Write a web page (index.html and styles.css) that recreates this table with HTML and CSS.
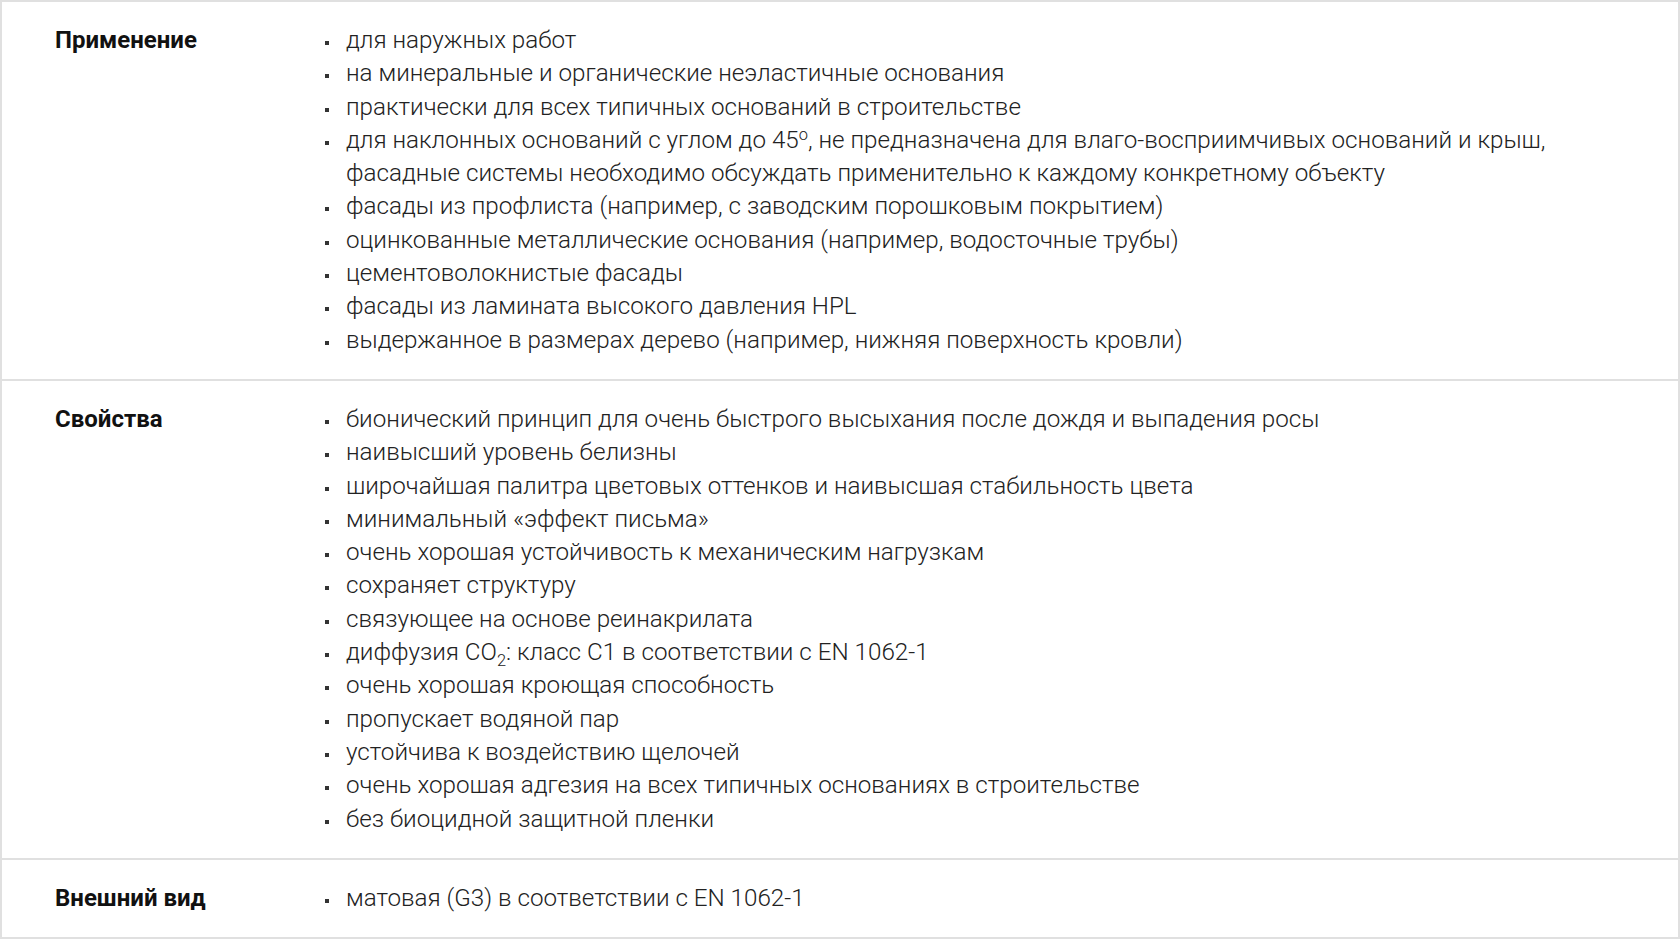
FILE: index.html
```html
<!DOCTYPE html>
<html lang="ru">
<head>
<meta charset="utf-8">
<title>Характеристики</title>
<link rel="stylesheet" href="styles.css">
</head>
<body>
<div class="spec">
  <div class="row">
    <div class="label">Применение</div>
    <ul class="list">
      <li><span>для наружных работ</span></li>
      <li><span>на минеральные и органические неэластичные основания</span></li>
      <li><span>практически для всех типичных оснований в строительстве</span></li>
      <li><span>для наклонных оснований с углом до 45<sup>o</sup>, не предназначена для влаго-восприимчивых оснований и крыш, фасадные системы необходимо обсуждать применительно к каждому конкретному объекту</span></li>
      <li><span>фасады из профлиста (например, с заводским порошковым покрытием)</span></li>
      <li><span>оцинкованные металлические основания (например, водосточные трубы)</span></li>
      <li><span>цементоволокнистые фасады</span></li>
      <li><span>фасады из ламината высокого давления HPL</span></li>
      <li><span>выдержанное в размерах дерево (например, нижняя поверхность кровли)</span></li>
    </ul>
  </div>
  <div class="row">
    <div class="label">Свойства</div>
    <ul class="list">
      <li><span>бионический принцип для очень быстрого высыхания после дождя и выпадения росы</span></li>
      <li><span>наивысший уровень белизны</span></li>
      <li><span>широчайшая палитра цветовых оттенков и наивысшая стабильность цвета</span></li>
      <li><span>минимальный «эффект письма»</span></li>
      <li><span>очень хорошая устойчивость к механическим нагрузкам</span></li>
      <li><span>сохраняет структуру</span></li>
      <li><span>связующее на основе реинакрилата</span></li>
      <li><span>диффузия CO<sub>2</sub>: класс C1 в соответствии с EN 1062-1</span></li>
      <li><span>очень хорошая кроющая способность</span></li>
      <li><span>пропускает водяной пар</span></li>
      <li><span>устойчива к воздействию щелочей</span></li>
      <li><span>очень хорошая адгезия на всех типичных основаниях в строительстве</span></li>
      <li><span>без биоцидной защитной пленки</span></li>
    </ul>
  </div>
  <div class="row">
    <div class="label">Внешний вид</div>
    <ul class="list">
      <li><span>матовая (G3) в соответствии с EN 1062-1</span></li>
    </ul>
  </div>
</div>
</body>
</html>
```

FILE: styles.css
```css
html, body {
  margin: 0;
  padding: 0;
  background: #fff;
}
body {
  font-family: Roboto, "Liberation Sans", sans-serif;
  color: #222;
}
.spec {
  width: 1680px;
  box-sizing: border-box;
  border: 2px solid #e0e0e0;
}
.row {
  display: grid;
  grid-template-columns: 270px 1fr;
  padding: 22px 60px 22px 53px;
  border-bottom: 2px solid #e0e0e0;
}
.row:last-child {
  border-bottom: none;
}
.label {
  font-weight: 700;
  font-size: 24px;
  line-height: 33.3px;
  color: #111;
}
.list {
  list-style: none;
  margin: 0;
  padding: 0;
  font-weight: 300;
  font-size: 24.2px;
  line-height: 33.3px;
}
.list li {
  display: flex;
  align-items: flex-start;
}
.list li::before {
  content: "";
  flex: none;
  width: 4px;
  height: 4px;
  margin-top: 17px;
  margin-right: 17px;
  background: #333;
}
sup, sub {
  font-size: 0.68em;
  line-height: 0;
}
sup { vertical-align: 0.5em; }
sub { vertical-align: -0.35em; }
```
